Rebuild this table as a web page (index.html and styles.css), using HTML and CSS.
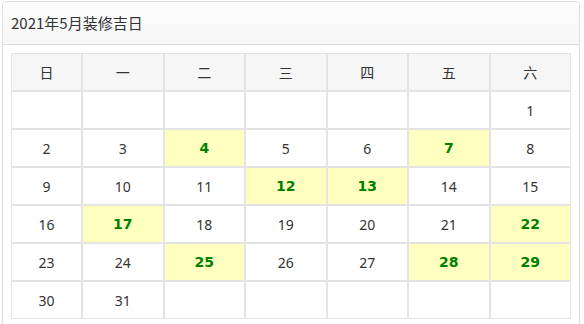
FILE: index.html
```html
<!DOCTYPE html>
<html lang="zh-CN">
<head>
<meta charset="utf-8">
<title>2021年5月装修吉日</title>
<link rel="stylesheet" href="styles.css">
</head>
<body>
<div class="panel">
  <div class="panel-heading">2021年5月装修吉日</div>
  <div class="panel-body">
    <table class="cal">
      <colgroup>
        <col class="col-first">
        <col><col><col><col><col><col>
      </colgroup>
      <thead>
        <tr><th>日</th><th>一</th><th>二</th><th>三</th><th>四</th><th>五</th><th>六</th></tr>
      </thead>
      <tbody>
        <tr><td></td><td></td><td></td><td></td><td></td><td></td><td>1</td></tr>
        <tr><td>2</td><td>3</td><td class="good">4</td><td>5</td><td>6</td><td class="good">7</td><td>8</td></tr>
        <tr><td>9</td><td>10</td><td>11</td><td class="good">12</td><td class="good">13</td><td>14</td><td>15</td></tr>
        <tr><td>16</td><td class="good">17</td><td>18</td><td>19</td><td>20</td><td>21</td><td class="good">22</td></tr>
        <tr><td>23</td><td>24</td><td class="good">25</td><td>26</td><td>27</td><td class="good">28</td><td class="good">29</td></tr>
        <tr><td>30</td><td>31</td><td></td><td></td><td></td><td></td><td></td></tr>
      </tbody>
    </table>
  </div>
</div>
</body>
</html>
```
FILE: styles.css
```css
html, body {
  margin: 0;
  padding: 0;
  background: #ffffff;
}
body {
  padding: 1px 0 0 2px;
  font-family: "Noto Sans", "Noto Sans CJK SC", sans-serif;
  color: #333333;
}
.panel {
  width: 578px;
  box-sizing: border-box;
  border: 1px solid #dddddd;
  border-radius: 4px;
  background: #ffffff;
}
.panel-heading {
  height: 42px;
  line-height: 42px;
  padding: 0 8px;
  font-size: 15px;
  color: #333333;
  background: linear-gradient(to bottom, #fdfdfd, #f6f6f6);
  border-bottom: 1px solid #dddddd;
  border-radius: 3px 3px 0 0;
  font-family: "Noto Sans CJK SC", sans-serif;
}
.panel-body {
  padding: 8px;
}
.cal {
  width: 560px;
  table-layout: fixed;
  border-collapse: separate;
  border-spacing: 0;
}
.col-first {
  width: 71px;
}
.cal th,
.cal td {
  border: 1px solid #e4e4e4;
  height: 36px;
  padding: 0;
  text-align: center;
  vertical-align: middle;
  font-size: 14px;
  box-sizing: content-box;
}
.cal th {
  background: #f6f6f6;
  font-weight: normal;
  font-family: "Noto Sans CJK SC", sans-serif;
  color: #333333;
}
.cal td {
  color: #333333;
}
.cal td.good {
  background: #ffffbf;
  color: #008000;
  font-weight: bold;
  font-family: "DejaVu Sans", sans-serif;
  font-size: 14px;
}
```
